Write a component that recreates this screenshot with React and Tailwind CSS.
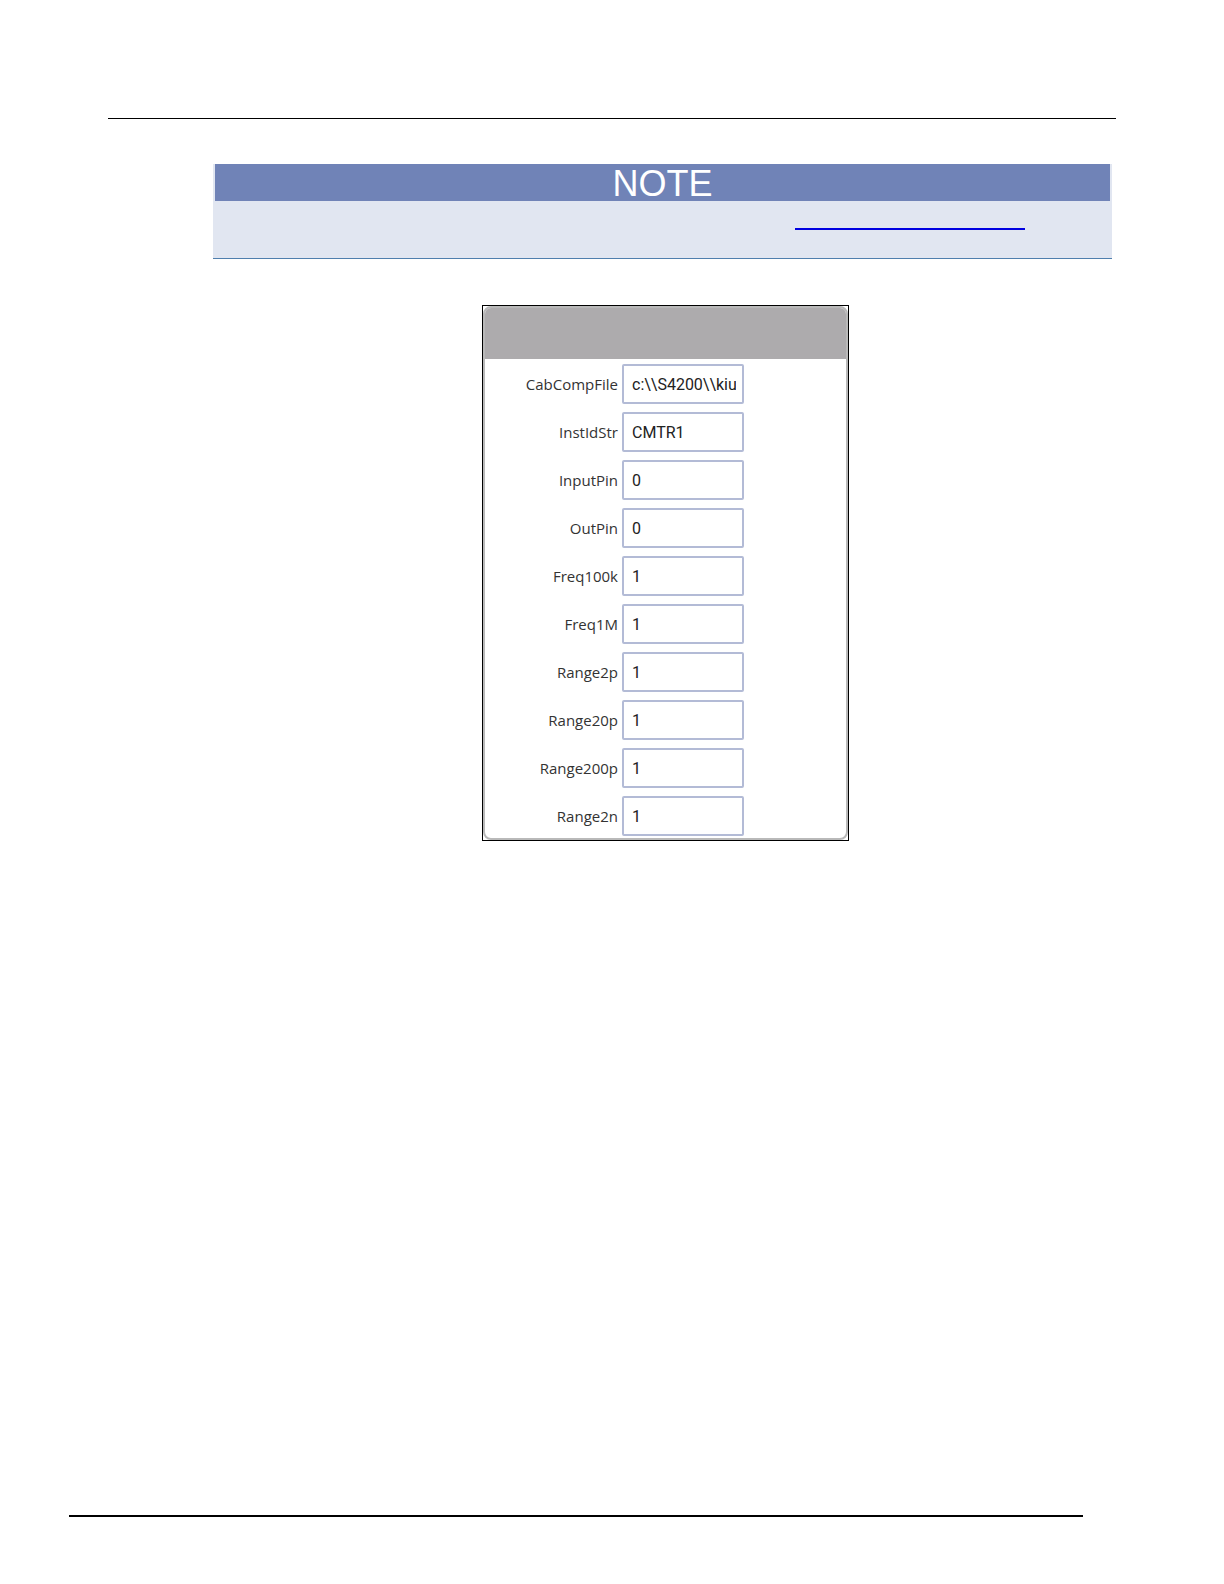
import { useState } from 'react';

const initialParams = [
  { name: 'CabCompFile', value: 'c:\\\\S4200\\\\kiuser' },
  { name: 'InstIdStr', value: 'CMTR1' },
  { name: 'InputPin', value: '0' },
  { name: 'OutPin', value: '0' },
  { name: 'Freq100k', value: '1' },
  { name: 'Freq1M', value: '1' },
  { name: 'Range2p', value: '1' },
  { name: 'Range20p', value: '1' },
  { name: 'Range200p', value: '1' },
  { name: 'Range2n', value: '1' },
];

function NoteBox() {
  return (
    <aside className="mr-1.5 border-b border-[#4f7fae] bg-[#e1e6f1]">
      <h2 className="mx-0.5 h-[37px] bg-[#7083b7] text-center text-4xl leading-[39px] text-white">NOTE</h2>
      <div className="flex h-[57px] items-start justify-end pt-[11px] pr-[87px]">
        <a href="#connection" aria-label="Connection compensation" className="h-[18px] w-[230px] border-b-2 border-[#0000e0]" />
      </div>
    </aside>
  );
}

function ParamRow({ name, value, onChange }) {
  return (
    <div className="flex items-center gap-1">
      <label htmlFor={name} className="w-[133px] text-right font-['Open_Sans','Noto_Sans',sans-serif] text-[15px] text-[#333]">
        {name}
      </label>
      <input
        type="text"
        id={name}
        name={name}
        value={value}
        onChange={onChange}
        className="h-10 w-[122px] rounded-xs border-2 border-[#b3bbd6] bg-white pr-1.5 pl-2 font-[Roboto,sans-serif] text-base text-[#222] outline-none"
      />
    </div>
  );
}

function ParamPanel() {
  const [params, setParams] = useState(initialParams);

  const handleChange = (e) => {
    const { name, value } = e.target;
    setParams(prev => prev.map(p => (p.name === name ? { ...p, value } : p)));
  };

  return (
    <section className="w-[367px] border border-black bg-white">
      <div className="overflow-hidden rounded-lg border-2 border-[#b9b9b9] bg-white">
        <div className="h-[51px] bg-[#adabad]" />
        <form className="flex flex-col gap-2 pt-[5px] pb-0.5">
          {params.map(p => (
            <ParamRow key={p.name} name={p.name} value={p.value} onChange={handleChange} />
          ))}
        </form>
      </div>
    </section>
  );
}

export default function App() {
  return (
    <div className="flex min-h-screen flex-col bg-white pt-[118px] pb-[67px] font-['Liberation_Sans',Arial,sans-serif]">
      <hr className="mx-[108px] border-t border-black" />
      <main className="mr-[106px] ml-[213px] flex-1 pt-[45px]">
        <NoteBox />
        <div className="mt-[46px] flex justify-center">
          <ParamPanel />
        </div>
      </main>
      <hr className="mr-[141px] ml-[69px] border-t-2 border-black" />
    </div>
  );
}
